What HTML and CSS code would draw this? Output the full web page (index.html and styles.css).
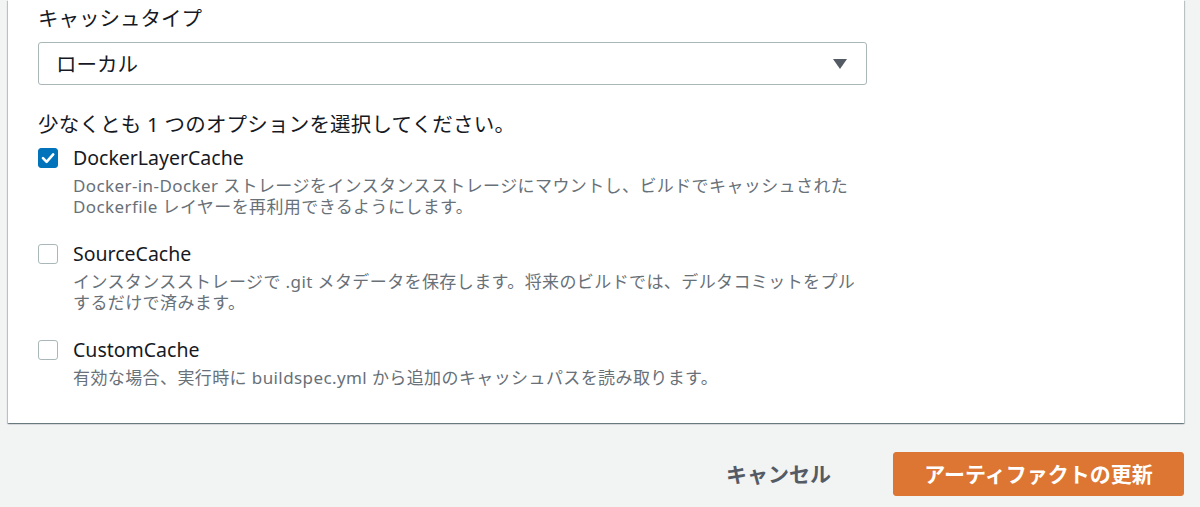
FILE: index.html
```html
<!DOCTYPE html>
<html lang="ja">
<head>
<meta charset="utf-8">
<title>キャッシュ設定</title>
<link rel="stylesheet" href="styles.css">
</head>
<body>
<div class="page">
  <section class="card">
    <div class="form">
      <div class="field-label">キャッシュタイプ</div>
      <div class="select">
        <span class="select-value">ローカル</span>
        <svg class="select-arrow" width="14" height="10" viewBox="0 0 14 10" aria-hidden="true"><path d="M0 0 H14 L7 10 Z" fill="#545b64"/></svg>
      </div>
      <div class="hint">少なくとも 1 つのオプションを選択してください。</div>
      <div class="options">
        <div class="option">
          <span class="checkbox checked">
            <svg width="20" height="20" viewBox="0 0 20 20" aria-hidden="true"><path d="M5 10.2 L8.6 13.8 L15.2 6.4" fill="none" stroke="#fff" stroke-width="2.6" stroke-linecap="round" stroke-linejoin="round"/></svg>
          </span>
          <div class="option-body">
            <div class="option-title">DockerLayerCache</div>
            <div class="option-desc">Docker-in-Docker ストレージをインスタンスストレージにマウントし、ビルドでキャッシュされた Dockerfile レイヤーを再利用できるようにします。</div>
          </div>
        </div>
        <div class="option">
          <span class="checkbox"></span>
          <div class="option-body">
            <div class="option-title">SourceCache</div>
            <div class="option-desc">インスタンスストレージで .git メタデータを保存します。将来のビルドでは、デルタコミットをプルするだけで済みます。</div>
          </div>
        </div>
        <div class="option">
          <span class="checkbox"></span>
          <div class="option-body">
            <div class="option-title">CustomCache</div>
            <div class="option-desc">有効な場合、実行時に buildspec.yml から追加のキャッシュパスを読み取ります。</div>
          </div>
        </div>
      </div>
    </div>
  </section>
  <div class="actions">
    <button class="btn btn-link">キャンセル</button>
    <button class="btn btn-primary">アーティファクトの更新</button>
  </div>
</div>
</body>
</html>
```
FILE: styles.css
```css
* { box-sizing: border-box; }
html, body {
  margin: 0;
  padding: 0;
  background: #f2f3f3;
  font-family: "Noto Sans", "Noto Sans CJK JP", sans-serif;
  color: #16191f;
}
.page {
  padding: 0 16px 0 8px;
}
.card {
  background: #fff;
  padding: 4px 30px 35px 30px;
  box-shadow: 0 1px 1px 0 rgba(0, 28, 36, 0.35), 1px 1px 1px 0 rgba(0, 28, 36, 0.18), -1px 1px 1px 0 rgba(0, 28, 36, 0.18);
}
.form {
  width: 829px;
}
.field-label {
  font-size: 20.5px;
  line-height: 28px;
}
.select {
  margin-top: 10px;
  height: 43px;
  border: 1px solid #aab7b8;
  border-radius: 3px;
  display: flex;
  align-items: center;
  justify-content: space-between;
  padding: 0 19px 0 17px;
}
.select-value {
  font-size: 20.5px;
  line-height: 28px;
}
.hint {
  margin-top: 25px;
  font-size: 20.5px;
  line-height: 28px;
  letter-spacing: 0.2px;
}
.options {
  margin-top: 7px;
  display: flex;
  flex-direction: column;
  gap: 24px;
}
.option {
  display: flex;
  gap: 15px;
}
.checkbox {
  flex: none;
  width: 20px;
  height: 20px;
  margin-top: 3px;
  border: 1px solid #aab7b8;
  border-radius: 3px;
  background: #fff;
  display: flex;
}
.checkbox.checked {
  background: #0073bb;
  border-color: #0073bb;
}
.checkbox.checked svg {
  margin: -1px;
}
.option-title {
  font-size: 19.5px;
  line-height: 26px;
}
.option-desc {
  margin-top: 4px;
  font-size: 17px;
  line-height: 21px;
  letter-spacing: 0.4px;
  color: #687078;
}
.actions {
  margin-top: 29px;
  display: flex;
  justify-content: flex-end;
  align-items: center;
  gap: 42px;
}
.btn {
  font-family: inherit;
  font-size: 21px;
  font-weight: 700;
  line-height: 28px;
  border-radius: 3px;
  cursor: pointer;
}
.btn-link {
  background: none;
  border: none;
  color: #545b64;
  padding: 8px 20px;
}
.btn-primary {
  width: 291px;
  height: 44px;
  background: #dc7632;
  border: 1px solid #dc7632;
  color: #fff;
  padding: 0 20px;
}
```
